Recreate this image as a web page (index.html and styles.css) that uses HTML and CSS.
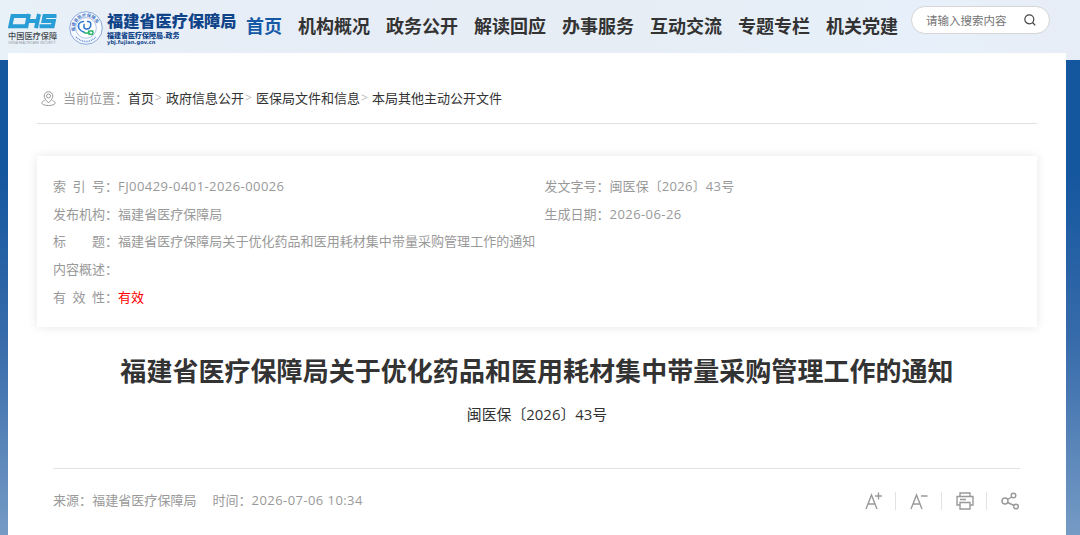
FILE: index.html
```html
<!DOCTYPE html>
<html lang="zh-CN">
<head>
<meta charset="utf-8">
<title>福建省医疗保障局</title>
<link rel="stylesheet" href="styles.css">
</head>
<body>
<header class="header">
  <div class="chs">
    <svg class="chs-mark" width="49" height="16" viewBox="0 0 49 16"><g fill="none" stroke="#299dd6" stroke-width="4"><path d="M20 3H4.500L2.300 13.200H17.500M21 1L18 15.200M19.500 8H29M31 1L28 15.200M48.500 3H36.500L35.500 8H45.800L44.700 13.200H31.500"/></g></svg>
    <div class="chs-name">中国医疗保障</div>
    <div class="chs-en">CHINA HEALTHCARE SECURITY</div>
  </div>
  <svg class="seal" width="34" height="34" viewBox="0 0 34 34">
    <defs><path id="ring" d="M6.400 21A11.300 11.300 0 1 1 27.600 21"/></defs>
    <circle cx="17" cy="17" r="16.300" fill="#f7fbff" stroke="#6f93d2" stroke-width=".8"/>
    <circle cx="17" cy="17" r="10.300" fill="#fff" stroke="#7c9cd6" stroke-width=".6"/>
    <text class="seal-text"><textPath href="#ring" startOffset="1">福建省医疗保障局</textPath></text>
    <path d="M7 26Q17 35 27 26" fill="none" stroke="#6c91d2" stroke-width="1.500" stroke-dasharray="1 .8"/>
    <g fill="none" stroke-linecap="round"><path d="M14.500 10.500C10 10.500 8.500 14 10 17.500C11 19.500 13 20.500 15.500 21.500" stroke="#2d78cf" stroke-width="1.600"/><path d="M18.500 10.500C23 10 22.500 15.500 20 17.500Q16.500 19 15 16.500V13.500" stroke="#2d78cf" stroke-width="1.500"/><path d="M15.500 21.500Q19 23.500 20 20H24M20 20V23.500M23.500 20.500C25 22 23 24.500 21 23" stroke="#2db56c" stroke-width="1.500"/></g>
  </svg>
  <div class="brand">
    <div class="brand-name">福建省医疗保障局</div>
    <div class="brand-sub">福建省医疗保障局.政务</div>
    <div class="brand-url">ybj.fujian.gov.cn</div>
  </div>
  <nav class="nav">
    <a class="active">首页</a><a>机构概况</a><a>政务公开</a><a>解读回应</a><a>办事服务</a><a>互动交流</a><a>专题专栏</a><a>机关党建</a>
  </nav>
  <div class="search"><span>请输入搜索内容</span>
    <svg width="12" height="12" viewBox="0 0 12 12" fill="none" stroke="#444" stroke-width="1.200"><circle cx="5.300" cy="5.300" r="4.500"/><path d="M8.500 8.500L11.300 11.300"/></svg>
  </div>
</header>
<main class="page">
  <div class="crumbs">
    <svg class="pin" width="15" height="15" viewBox="0 0 15 15" fill="none" stroke="#999" stroke-width="1"><path d="M7.500 12C4.500 9 3.200 7 3.200 5A4.300 4.300 0 0 1 11.800 5C11.800 7 10.500 9 7.500 12Z"/><circle cx="7.500" cy="5" r="2"/><path d="M3.500 9.500C.5 10.500 .3 12.500 2 13.500Q4 14.500 7.500 14.500T13 13.500C14.700 12.500 14.500 10.500 11.500 9.500"/></svg>
    <span class="here">当前位置：</span><a>首页</a><i>&gt;</i><a>政府信息公开</a><i>&gt;</i><a>医保局文件和信息</a><i>&gt;</i><a>本局其他主动公开文件</a>
  </div>
  <section class="info">
    <div class="row"><span class="label"><b>索</b><b>引</b><b>号</b></span>：<span class="num">FJ00429-0401-2026-00026</span></div>
    <div class="row"><span class="label">发文字号</span>：<span>闽医保〔<span class="num">2026</span>〕<span class="num">43</span>号</span></div>
    <div class="row"><span class="label">发布机构</span>：<span>福建省医疗保障局</span></div>
    <div class="row"><span class="label">生成日期</span>：<span class="num">2026-06-26</span></div>
    <div class="row wide"><span class="label"><b>标</b><b>题</b></span>：<span>福建省医疗保障局关于优化药品和医用耗材集中带量采购管理工作的通知</span></div>
    <div class="row wide"><span class="label">内容概述</span>：</div>
    <div class="row wide"><span class="label"><b>有</b><b>效</b><b>性</b></span>：<span class="valid">有效</span></div>
  </section>
  <h1 class="title">福建省医疗保障局关于优化药品和医用耗材集中带量采购管理工作的通知</h1>
  <div class="docno">闽医保〔2026〕43号</div>
  <div class="meta">
    <span class="source">来源：福建省医疗保障局</span><span>时间：<span class="num">2026-07-06 10:34</span></span>
    <div class="tools">
      <svg width="18" height="18" viewBox="0 0 18 18"><path d="M1 17L6.500 3L12 17M3 12H10M10 4H17M13.500 .5V7.500"/></svg>
      <svg width="18" height="18" viewBox="0 0 18 18"><path d="M1 17L6.500 3L12 17M3 12H10M11 4H17.500"/></svg>
      <svg width="18" height="18" viewBox="0 0 18 18"><path d="M4 4.500V1H14V4.500M4 13H1V4.500H17V13H14M4 10.500H14V17H4ZM4 7.500H10"/></svg>
      <svg width="18" height="18" viewBox="0 0 18 18"><circle cx="4" cy="9" r="3"/><circle cx="12.500" cy="3.500" r="2.300"/><circle cx="15" cy="14.500" r="2.300"/><path d="M6.500 7.500L10.700 5M6.700 10.500L13 13.500"/></svg>
    </div>
  </div>
</main>
</body>
</html>
```
FILE: styles.css
```css
* { box-sizing: border-box; }
body {
  margin: 0;
  height: 535px;
  overflow: hidden;
  font: 13px/28px "Noto Sans CJK SC", sans-serif;
  color: #999;
  background: linear-gradient(#15579f 60px, #15579f 175px, #386cab 345px, #769bc5 535px);
}
.header {
  display: flex;
  align-items: flex-start;
  height: 60px;
  padding-left: 8px;
  background: linear-gradient(90deg, #e8f0f8, #e7edf6 30%, #e6edf5 60%, #e7f0fa 85%, #e7edf6);
}
.chs { width: 49px; margin-top: 13px; }
.chs-mark { display: block; }
.chs-name { font-size: 8.2px; line-height: 13px; font-weight: 500; color: #454a50; white-space: nowrap; }
.chs-en { font: 2.8px/3px "Liberation Sans", sans-serif; color: #8b9299; white-space: nowrap; letter-spacing: .2px; }
.seal { margin: 11px 0 0 12px; }
.seal-text { font-size: 4.200px; font-weight: 700; fill: #4673c3; }
.brand { width: 139px; margin: 10px 0 0 4px; color: #104489; font-weight: 900; white-space: nowrap; }
.brand-name { font-size: 16.2px; line-height: 21px; }
.brand-sub { font-size: 7px; line-height: 8px; }
.brand-url { font: 700 5.200px/7px "DejaVu Sans", sans-serif; }
.nav { display: flex; gap: 16px; margin-top: 11px; font-size: 18px; font-weight: 700; color: #333; white-space: nowrap; }
.nav .active { color: #1558a6; }
.search {
  display: flex;
  align-items: center;
  gap: 17px;
  width: 139px;
  height: 28px;
  margin: 6px 0 0 13px;
  padding-left: 14px;
  border: 1px solid #d5d5d5;
  border-radius: 14px;
  background: #fff;
  font-size: 11.5px;
  color: #757575;
  white-space: nowrap;
}
.page { height: 482px; margin: -7px 14px 0 8px; padding: 30px 29px 0; background: #fff; }
.crumbs { display: flex; align-items: center; height: 41px; padding: 0 0 11px 4px; border-bottom: 1px solid #e0e0e0; color: #333; }
.crumbs i { width: 12px; padding-left: 1px; font: 12px/28px "Open Sans", sans-serif; color: #bbb; }
.pin { margin: 1px 7px 0 0; }
.here { color: #999; }
.info {
  display: grid;
  grid-template-columns: 491.500px 1fr;
  grid-auto-rows: 27.700px;
  height: 171px;
  margin-top: 32px;
  padding: 16px 16px 0;
  box-shadow: 0 0 10px rgba(0, 0, 0, .1);
}
.row { display: flex; white-space: nowrap; letter-spacing: .04px; }
.wide { grid-column: 1 / -1; }
.label { display: flex; justify-content: space-between; width: 52px; letter-spacing: 0; }
.label b { font-weight: 400; }
.num { font-family: "Open Sans", sans-serif; letter-spacing: .43px; }
.row:nth-child(2) .num { letter-spacing: .3px; }
.valid { color: #f00; }
.title { margin: 23px 0 0; font-size: 26px; letter-spacing: .04px; line-height: 40px; font-weight: 700; color: #333; text-align: center; white-space: nowrap; }
.docno { margin-top: 10px; font: 14.900px/28px "Open Sans", "Noto Sans CJK SC", sans-serif; color: #333; text-align: center; }
.meta { display: flex; align-items: center; height: 64px; margin: 40px 17px 0 16px; padding-bottom: 2px; border-top: 1px solid #e3e3e3; }
.source { margin-right: 16px; letter-spacing: .05px; }
.tools { display: flex; margin: 2px 1px 0 auto; }
.tools svg { fill: none; stroke: #999; stroke-width: 1.400; }
.tools svg + svg { box-sizing: content-box; padding-left: 14px; margin-left: 12.500px; border-left: 1px solid #e3e3e3; }
```
